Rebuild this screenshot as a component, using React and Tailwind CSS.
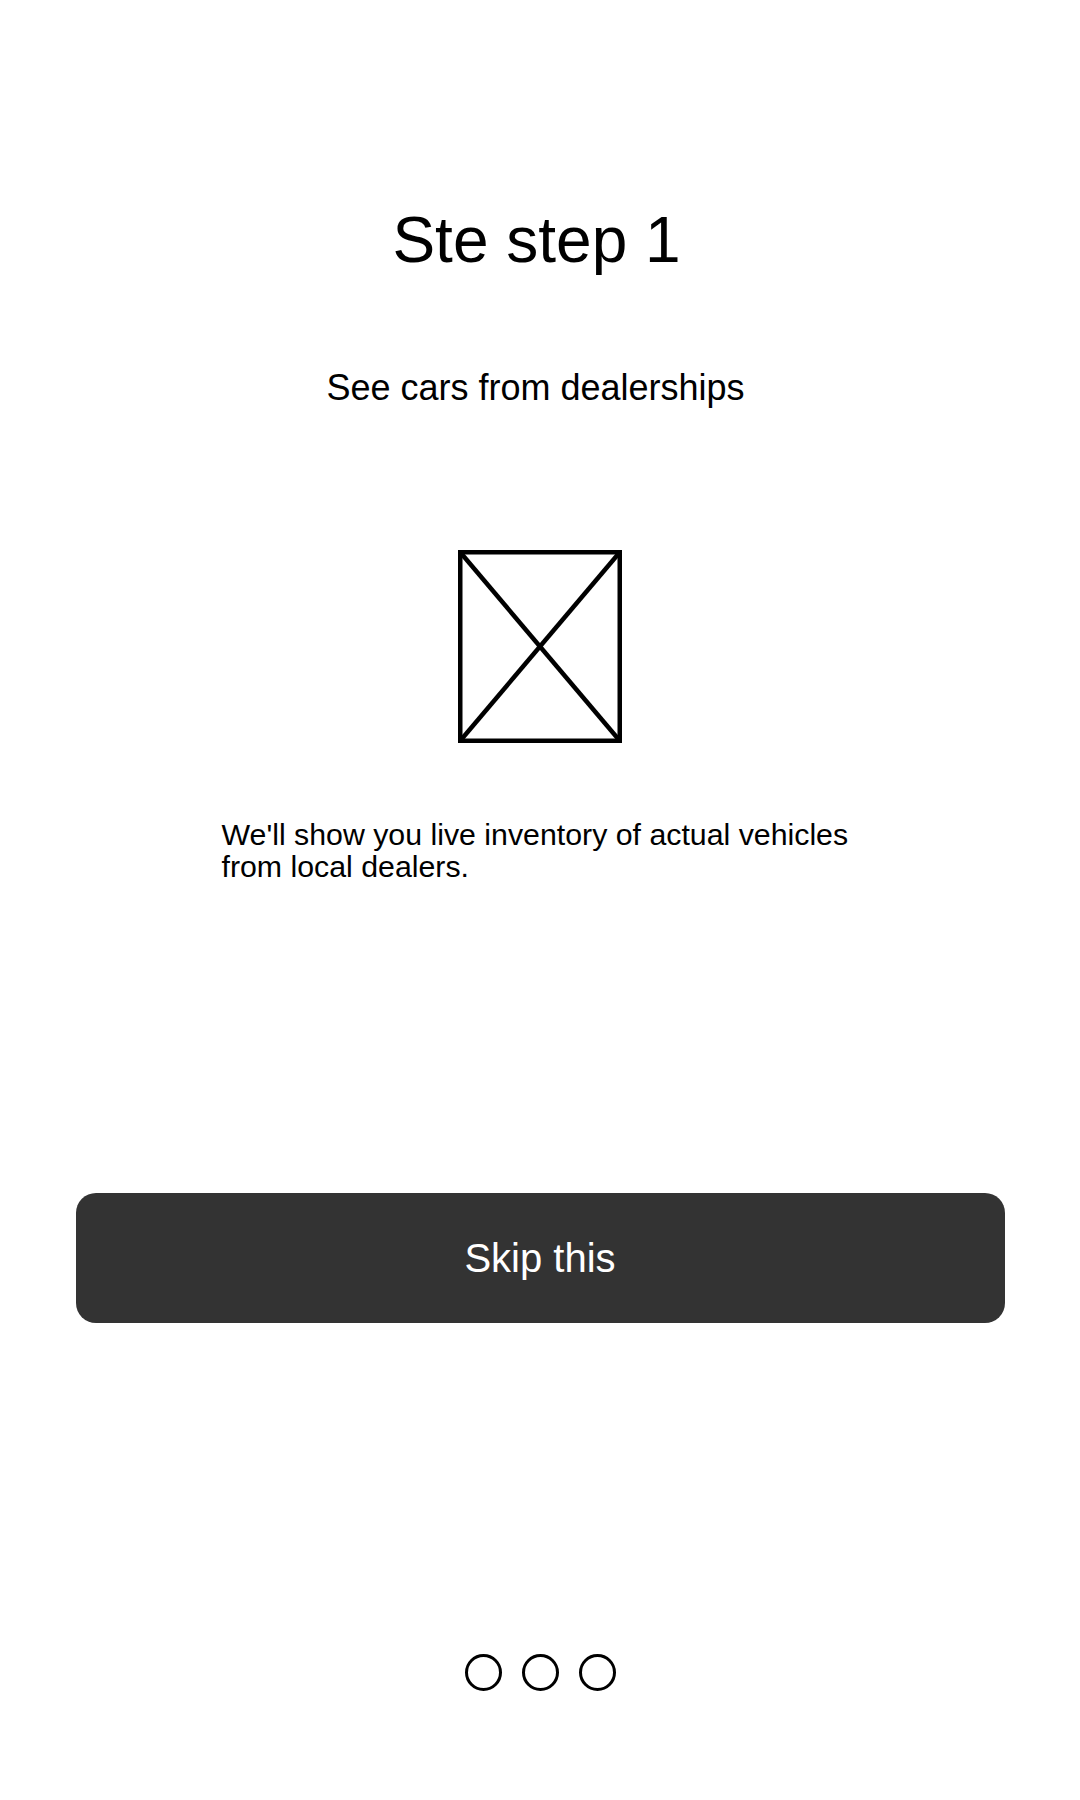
export default function App() {
  return (
    <div className="w-full h-[1800px] bg-white flex flex-col items-center font-['Liberation_Sans',Arial,sans-serif] text-black">
      <h1 className="mt-[208px] pr-[7px] text-[64px] leading-[64px] font-normal">Ste step 1</h1>

      <p className="mt-[98px] pr-[9px] text-[36px] leading-[36px]">See cars from dealerships</p>

      <svg className="mt-[144px]" width="164" height="193" viewBox="0 0 164 193" fill="none">
        <rect x="2.25" y="2.25" width="159.5" height="188.5" stroke="black" strokeWidth="4.5" />
        <line x1="2.25" y1="2.25" x2="161.75" y2="190.75" stroke="black" strokeWidth="4.5" />
        <line x1="161.75" y1="2.25" x2="2.25" y2="190.75" stroke="black" strokeWidth="4.5" />
      </svg>

      <p className="mt-[76px] ml-[3px] w-[640px] text-[30.3px] leading-[32px] text-left">
        We'll show you live inventory of actual vehicles from local dealers.
      </p>

      <button className="mt-[310px] w-[929px] h-[130px] rounded-[20px] bg-[#333333] text-white text-[40px] leading-none">
        Skip this
      </button>

      <div className="mt-[331px] flex gap-[20px]">
        <span className="w-[37px] h-[37px] rounded-full border-[3px] border-black" />
        <span className="w-[37px] h-[37px] rounded-full border-[3px] border-black" />
        <span className="w-[37px] h-[37px] rounded-full border-[3px] border-black" />
      </div>
    </div>
  );
}
